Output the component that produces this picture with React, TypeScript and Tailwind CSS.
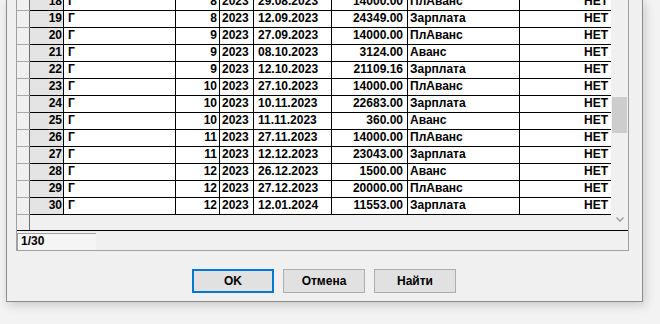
import React from "react";

const rows = [
  ["18", "Г", "8", "2023", "29.08.2023", "14000.00", "ПлАванс"],
  ["19", "Г", "8", "2023", "12.09.2023", "24349.00", "Зарплата"],
  ["20", "Г", "9", "2023", "27.09.2023", "14000.00", "ПлАванс"],
  ["21", "Г", "9", "2023", "08.10.2023", "3124.00", "Аванс"],
  ["22", "Г", "9", "2023", "12.10.2023", "21109.16", "Зарплата"],
  ["23", "Г", "10", "2023", "27.10.2023", "14000.00", "ПлАванс"],
  ["24", "Г", "10", "2023", "10.11.2023", "22683.00", "Зарплата"],
  ["25", "Г", "10", "2023", "11.11.2023", "360.00", "Аванс"],
  ["26", "Г", "11", "2023", "27.11.2023", "14000.00", "ПлАванс"],
  ["27", "Г", "11", "2023", "12.12.2023", "23043.00", "Зарплата"],
  ["28", "Г", "12", "2023", "26.12.2023", "1500.00", "Аванс"],
  ["29", "Г", "12", "2023", "27.12.2023", "20000.00", "ПлАванс"],
  ["30", "Г", "12", "2023", "12.01.2024", "11553.00", "Зарплата"],
];

function Row({ r }: { r: string[] }) {
  return (
    <div className="flex h-[17px] leading-[12px]">
      <div className="w-[13px] shrink-0 border-r border-b border-r-[#6e6e6e] border-b-[#a8a8a8] bg-[#f0f0f0]" />
      <div className="w-[34px] shrink-0 border-r border-b border-black bg-[#e4e4e4] text-right pr-[1px] pt-[1px]">{r[0]}</div>
      <div className="w-[112px] shrink-0 border-r border-b border-black bg-white pl-[4px] pt-[1px]">{r[1]}</div>
      <div className="w-[44px] shrink-0 border-r border-b border-black bg-white text-right pr-[2px] pt-[1px]">{r[2]}</div>
      <div className="w-[34px] shrink-0 border-r border-b border-black bg-white pl-[2px] pt-[1px]">{r[3]}</div>
      <div className="w-[78px] shrink-0 border-r border-b border-black bg-white pl-[4px] pt-[1px]">{r[4]}</div>
      <div className="w-[76px] shrink-0 border-r border-b border-black bg-white text-right pr-[4px] pt-[1px]">{r[5]}</div>
      <div className="w-[112px] shrink-0 border-r border-b border-black bg-white pl-[2px] pt-[1px]">{r[6]}</div>
      <div className="w-[91px] shrink-0 border-b border-black bg-white text-right pr-[3px] pt-[1px]">НЕТ</div>
    </div>
  );
}

export default function App() {
  return (
    <div className="w-[660px] h-[324px] overflow-hidden bg-[#f3f3f3] font-['Liberation_Sans',Arial,sans-serif] text-[12px] font-bold text-black">
      <div className="ml-[6px] w-[637px] h-[302px] overflow-hidden bg-[#f0f0f0] border-x border-b border-[#8c8c8c] shadow-[2px_3px_10px_rgba(0,0,0,0.18)] flex flex-col">
        <div className="ml-[9px] mt-[-6px] w-[613px] border-x border-b border-[#a0a0a0] flex flex-col">
          <div className="flex border-b border-black h-[237px]">
            <div className="w-[594px] flex flex-col">
              {rows.map((r) => (
                <Row key={r[0]} r={r} />
              ))}
              <div className="flex flex-1">
                <div className="w-[13px] border-r border-[#6e6e6e] bg-[#f0f0f0]" />
              </div>
            </div>
            <div className="w-[17px] bg-[#f0f0f0] flex flex-col">
              <div className="h-[103px]" />
              <div className="ml-[1px] w-[15px] h-[36px] bg-[#cdcdcd]" />
              <div className="flex-1" />
              <div className="h-[17px] flex items-center justify-center mb-[2px]">
                <svg width="8" height="5" viewBox="0 0 8 5">
                  <path d="M0.5 0.5 L4 4 L7.5 0.5" fill="none" stroke="#9a9a9a" strokeWidth="1.3" />
                </svg>
              </div>
            </div>
          </div>
          <div className="h-[19px] flex">
            <div className="mt-[2px] w-[79px] h-[17px] bg-[#f5f5f5] border-t border-l border-[#a0a0a0] pl-[3px] leading-[15px]">
              1/30
            </div>
          </div>
        </div>
        <div className="mt-[18px] ml-[185px] flex gap-[9px]">
          <button className="w-[82px] h-[24px] bg-[#e1e1e1] border-2 border-[#0078d7] font-bold text-[12px] leading-[18px]">
            OK
          </button>
          <button className="w-[82px] h-[24px] bg-[#e1e1e1] border border-[#adadad] font-bold text-[12px] leading-[20px]">
            Отмена
          </button>
          <button className="w-[82px] h-[24px] bg-[#e1e1e1] border border-[#adadad] font-bold text-[12px] leading-[20px]">
            Найти
          </button>
        </div>
      </div>
    </div>
  );
}
